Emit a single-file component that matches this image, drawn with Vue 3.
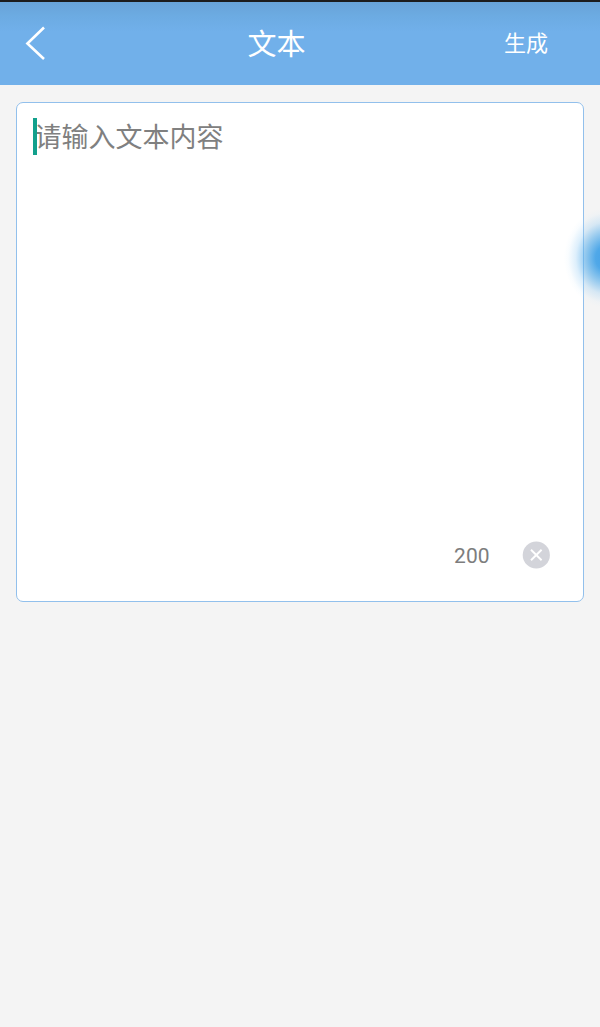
<script setup>
const title = '文本'
const action = '生成'
const placeholder = '请输入文本内容'
const remaining = 200
</script>

<template>
  <div class="page">
    <header class="bar">
      <svg class="back" width="22" height="36" viewBox="0 0 22 36" fill="none">
        <path d="M19 1.5 2.4 17.5 19 33" stroke="#fff" stroke-width="2.6" />
      </svg>
      <h1 class="title">{{ title }}</h1>
      <span class="action">{{ action }}</span>
    </header>
    <main class="content">
      <section class="box">
        <div class="input">
          <span class="caret"></span>
          <span class="placeholder">{{ placeholder }}</span>
        </div>
        <div class="foot">
          <span class="count">{{ remaining }}</span>
          <svg class="clear" width="28" height="28" viewBox="0 0 28 28">
            <circle cx="14.3" cy="14" r="13.6" fill="#d3d4da" />
            <path d="M9 8.8 19.6 19.2M19.6 8.8 9 19.2" stroke="#fff" stroke-width="1.9" />
          </svg>
        </div>
      </section>
    </main>
    <div class="glow"></div>
  </div>
</template>

<style scoped>
.page {
  position: relative;
  width: 600px;
  height: 1027px;
  overflow: hidden;
  background: #f4f4f4;
  font-family: "Roboto", "Noto Sans CJK SC", sans-serif;
}
.bar {
  height: 85px;
  box-sizing: border-box;
  border-top: 2px solid #1c1c1c;
  padding: 0 52px 0 25px;
  display: flex;
  align-items: center;
  justify-content: space-between;
  color: #fff;
  background: linear-gradient(#68a3d8 0, #6cabe2 14px, #71b0ea 30px, #71b0ea 100%);
}
.back {
  flex: none;
}
.title {
  margin: 0;
  font-size: 29px;
  font-weight: 400;
  line-height: 36px;
  position: relative;
  left: 1px;
  top: 1px;
}
.action {
  font-size: 22px;
  line-height: 30px;
  position: relative;
}
.content {
  padding: 16.5px 16px 0;
}
.box {
  height: 500.5px;
  box-sizing: border-box;
  border: 1.5px solid #92c0ec;
  border-radius: 7px;
  background: #fff;
  display: flex;
  flex-direction: column;
  justify-content: space-between;
  padding: 15.5px 33.5px 32.5px 15.5px;
}
.input {
  display: flex;
  align-items: center;
  height: 37px;
}
.caret {
  width: 4px;
  height: 37px;
  background: #12a08c;
  flex: none;
  margin-right: -2px;
  position: relative;
  z-index: 1;
}
.placeholder {
  color: #808080;
  font-size: 27px;
  line-height: 37px;
  position: relative;
  top: 2px;
}
.foot {
  display: flex;
  align-items: center;
  justify-content: flex-end;
  gap: 32px;
}
.count {
  color: #7d7d7d;
  font-size: 21px;
  position: relative;
  top: 1px;
}
.clear {
  display: block;
}
.glow {
  position: absolute;
  left: 560px;
  top: 208px;
  width: 80px;
  height: 100px;
  background: radial-gradient(ellipse 42px 50px at 46px 50px, rgba(58, 156, 230, 0.95) 0, rgba(62, 160, 231, 0.9) 25%, rgba(90, 175, 235, 0.62) 50%, rgba(150, 205, 245, 0.32) 72%, rgba(200, 230, 250, 0.1) 90%, rgba(220, 240, 252, 0) 100%);
}
</style>
